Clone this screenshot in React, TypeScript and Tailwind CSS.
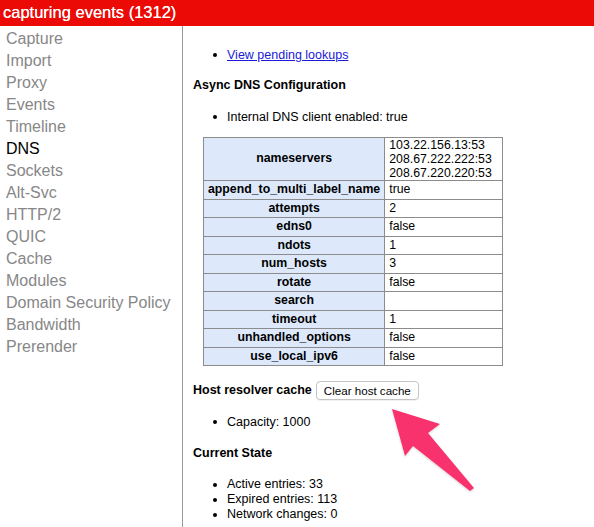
const tabs = [
  "Capture",
  "Import",
  "Proxy",
  "Events",
  "Timeline",
  "DNS",
  "Sockets",
  "Alt-Svc",
  "HTTP/2",
  "QUIC",
  "Cache",
  "Modules",
  "Domain Security Policy",
  "Bandwidth",
  "Prerender",
];

const dnsConfig: [string, string[]][] = [
  ["nameservers", ["103.22.156.13:53", "208.67.222.222:53", "208.67.220.220:53"]],
  ["append_to_multi_label_name", ["true"]],
  ["attempts", ["2"]],
  ["edns0", ["false"]],
  ["ndots", ["1"]],
  ["num_hosts", ["3"]],
  ["rotate", ["false"]],
  ["search", [""]],
  ["timeout", ["1"]],
  ["unhandled_options", ["false"]],
  ["use_local_ipv6", ["false"]],
];

function Bullet({ children }: { children: React.ReactNode }) {
  return (
    <li className="flex items-center pl-[20px]">
      <span className="w-[4px] h-[4px] rounded-full bg-black shrink-0" />
      <span className="ml-[10px]">{children}</span>
    </li>
  );
}

export default function App() {
  return (
    <div className="relative h-screen flex flex-col overflow-hidden bg-white font-['Liberation_Sans',Arial,sans-serif]">
      <header className="h-[26px] shrink-0 bg-[#ec0a06] text-white text-[16.5px] leading-[24px] pl-[3px] [text-shadow:0_0_0.4px_#fff]">
        capturing events (1312)
      </header>

      <div className="flex flex-1 min-h-0">
        <nav className="w-[183px] shrink-0 border-r border-[#9a9a9a] pt-[2px] pl-[6px]">
          <ul className="text-[16px] leading-[22px]">
            {tabs.map((tab) => (
              <li
                key={tab}
                className={tab === "DNS" ? "text-black" : "text-[#878787]"}
              >
                {tab}
              </li>
            ))}
          </ul>
        </nav>

        <main className="flex-1 pl-[10px] text-[12.5px] text-black">
          <ul className="mt-[21px] leading-[16px]">
            <Bullet>
              <a href="#" className="text-[#1a1ad8] underline">
                View pending lookups
              </a>
            </Bullet>
          </ul>

          <h4 className="mt-[14px] font-bold leading-[16px]">
            Async DNS Configuration
          </h4>

          <ul className="mt-[16px] leading-[16px]">
            <Bullet>Internal DNS client enabled: true</Bullet>
          </ul>

          <table className="mt-[12px] ml-[10px] border-collapse text-[12.3px]">
            <tbody>
              {dnsConfig.map(([key, values]) => (
                <tr key={key}>
                  <th className="w-[181px] border border-[#8c8c8c] bg-[#dde9fb] px-[4px] py-px leading-[15.5px] font-bold text-center whitespace-nowrap">
                    {key}
                  </th>
                  <td
                    className={
                      values.length > 1
                        ? "w-[118px] border border-[#8c8c8c] px-[4px] py-0 leading-[14px] text-left"
                        : "w-[118px] border border-[#8c8c8c] px-[4px] py-px leading-[15.5px] text-left"
                    }
                  >
                    {values.map((v, i) => (
                      <div key={i}>{v || "\u00a0"}</div>
                    ))}
                  </td>
                </tr>
              ))}
            </tbody>
          </table>

          <div className="mt-[14px] flex items-center h-[20px]">
            <span className="font-bold">Host resolver cache</span>
            <button className="ml-[4px] h-[19px] px-[7px] rounded-[4px] border border-[#c4c4c4] bg-white text-[11.6px] leading-[17px] text-black shadow-[0_1px_0_rgba(0,0,0,0.05)]">
              Clear host cache
            </button>
          </div>

          <ul className="mt-[14px] leading-[16px]">
            <Bullet>Capacity: 1000</Bullet>
          </ul>

          <h4 className="mt-[15px] font-bold leading-[16px]">Current State</h4>

          <ul className="mt-[16px] leading-[15px]">
            <Bullet>Active entries: 33</Bullet>
            <Bullet>Expired entries: 113</Bullet>
            <Bullet>Network changes: 0</Bullet>
          </ul>
        </main>
      </div>

      {/* annotation arrow pointing at the button */}
      <svg
        className="absolute left-[380px] top-[400px] pointer-events-none"
        width="110"
        height="100"
        viewBox="0 0 110 100"
      >
        <defs>
          <filter id="arrowShadow" x="-20%" y="-20%" width="140%" height="140%">
            <feDropShadow dx="0" dy="1" stdDeviation="1.2" floodColor="#000" floodOpacity="0.18" />
          </filter>
        </defs>
        <polygon
          points="12,9 60,24 48,33 94,88 90,91 33,46 25,56"
          fill="#f8336d"
          filter="url(#arrowShadow)"
        />
      </svg>
    </div>
  );
}
